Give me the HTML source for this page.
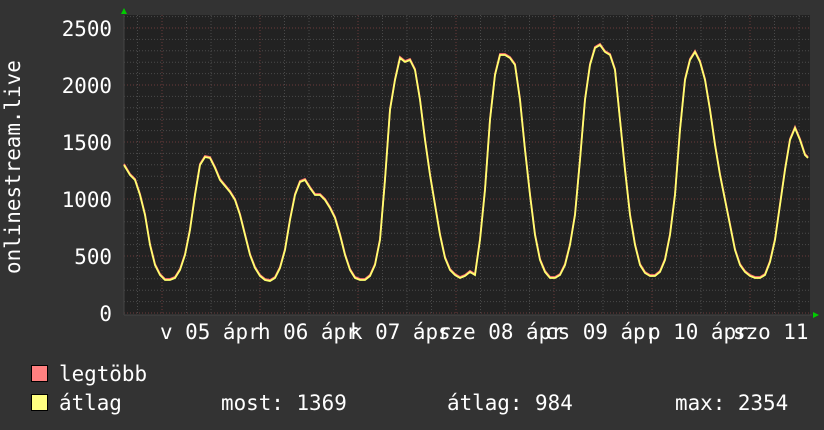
<!DOCTYPE html><html><head><meta charset="utf-8"><style>
body{margin:0;width:824px;height:430px;background:#333;overflow:hidden;position:relative;font-family:"DejaVu Sans Mono","Liberation Mono",monospace;color:#fff;font-size:20.9px}
.t{position:absolute;white-space:pre;line-height:1}
.sq{position:absolute;width:15px;height:15px;border:1px solid #000}
</style></head><body>
<svg width="824" height="430" style="position:absolute;left:0;top:0">
<rect x="124" y="15" width="686" height="300" fill="#222"/>
<g id="grid"></g>
<line x1="124" y1="15" x2="124" y2="315" stroke="#444"/>
<line x1="124" y1="315" x2="812" y2="315" stroke="#444"/>
<polygon points="121,14 127,14 124,8" fill="#0c0"/>
<polygon points="813,312 813,318 819,315" fill="#0c0"/>
<polyline id="r" fill="none" stroke="#ff7070" stroke-width="1.8"/>
<polyline id="y" fill="none" stroke="#ffff70" stroke-width="1.8"/>
</svg>
<div class="t" style="left:0;transform:translate(3px,0) rotate(-90deg);transform-origin:0 0;top:274px">onlinestream.live</div>
<div class="t" style="right:712px;top:19px">2500</div>
<div class="t" style="right:712px;top:76px">2000</div>
<div class="t" style="right:712px;top:133px">1500</div>
<div class="t" style="right:712px;top:190px">1000</div>
<div class="t" style="right:712px;top:247px">500</div>
<div class="t" style="right:712px;top:304px">0</div>
<div class="t" style="left:160px;top:322px">v 05 ápr</div>
<div class="t" style="left:258px;top:322px">h 06 ápr</div>
<div class="t" style="left:350px;top:322px">k 07 ápr</div>
<div class="t" style="left:438px;top:322px">sze 08 ápr</div>
<div class="t" style="left:545px;top:322px">cs 09 ápr</div>
<div class="t" style="left:648px;top:322px">p 10 ápr</div>
<div class="t" style="left:733px;top:322px">szo 11</div>
<div class="sq" style="left:31px;top:365px;background:#ff8080"></div>
<div class="sq" style="left:31px;top:394px;background:#ffff80"></div>
<div class="t" style="left:59px;top:364px">legtöbb</div>
<div class="t" style="left:59px;top:393px">átlag</div>
<div class="t" style="left:221px;top:393px">most: 1369</div>
<div class="t" style="left:447px;top:393px">átlag: 984</div>
<div class="t" style="left:675px;top:393px">max: 2354</div>
<script>
var g=document.getElementById('grid'),s='';
for(var v=0;v<=2600;v+=100){var y=313-v*0.114;if(y<15)break;s+='<line x1="124" x2="810" y1="'+y+'" y2="'+y+'" stroke="'+(v%500==0?'#6a3a3a':'#4a4a4a')+'" stroke-dasharray="1,2"/>';}
for(var i=0;i<30;i++){var x=137.5+i*24.5;if(x>810)break;var maj=Math.abs((x-162)%98)<2||Math.abs((x-162)%98-98)<2;s+='<line y1="15" y2="315" x1="'+x+'" x2="'+x+'" stroke="'+(maj?'#6a3a3a':'#4a4a4a')+'" stroke-dasharray="1,2"/>';}
g.innerHTML=s;
var p=[124,165,130,175,135,180,140,195,145,215,150,245,155,265,160,275,165,280,170,280,175,278,180,270,185,255,190,230,195,195,200,165,205,157,210,158,215,168,220,180,225,186,230,192,235,200,240,215,245,235,250,255,255,268,260,276,265,280,270,281,275,278,280,268,285,250,290,220,295,195,300,182,305,180,310,188,315,195,320,195,325,200,330,208,335,218,340,235,345,255,350,270,355,278,360,280,365,280,370,276,375,265,380,240,385,180,390,110,395,80,400,58,405,62,410,60,415,70,420,100,425,140,430,175,435,205,440,235,445,258,450,270,455,275,460,278,465,276,470,272,475,275,480,240,485,190,490,120,495,75,500,55,505,55,510,58,515,65,520,100,525,150,530,195,535,235,540,260,545,272,550,278,555,278,560,275,565,265,570,245,575,215,580,160,585,100,590,65,595,48,600,45,605,52,610,55,615,70,620,120,625,170,630,215,635,245,640,265,645,273,650,276,655,276,660,272,665,260,670,235,675,195,680,130,685,80,690,60,695,52,700,62,705,80,710,110,715,145,720,175,725,200,730,225,735,250,740,265,745,272,750,276,755,278,760,278,765,275,770,262,775,240,780,205,785,170,790,140,795,128,800,140,805,155,808,158];
var a=[],b=[];for(var i=0;i<p.length;i+=2){a.push(p[i]+','+(p[i+1]-1));b.push(p[i]+','+p[i+1]);}
document.getElementById('r').setAttribute('points',a.join(' '));
document.getElementById('y').setAttribute('points',b.join(' '));
</script>
</body></html>
